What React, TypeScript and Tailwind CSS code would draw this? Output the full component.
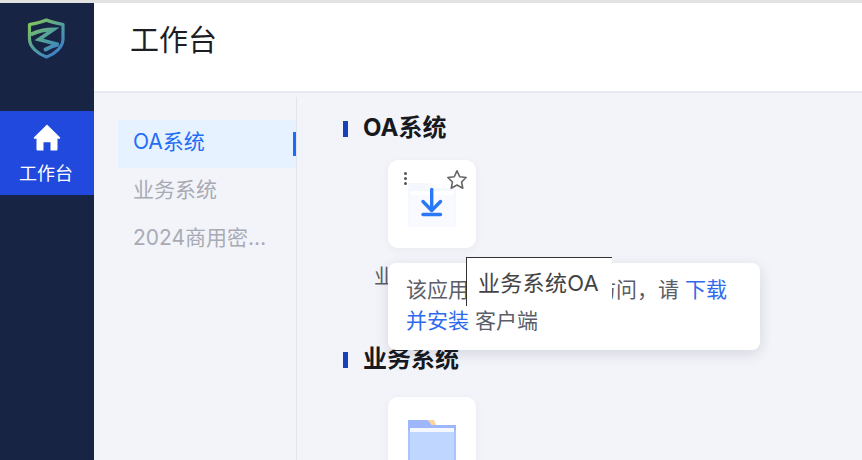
import React from "react";

const font = { fontFamily: '"Inter", "Noto Sans CJK SC", sans-serif' };

function Logo() {
  return (
    <svg width="40" height="44" viewBox="0 0 40 44" fill="none">
      <defs>
        <linearGradient id="lg" gradientUnits="userSpaceOnUse" x1="4" y1="4" x2="34" y2="40">
          <stop offset="0" stopColor="#86c55a" />
          <stop offset="0.5" stopColor="#4f9fa0" />
          <stop offset="1" stopColor="#3a76d2" />
        </linearGradient>
      </defs>
      <path d="M19.5 3 C25 5.5 31 6.5 36 7.5 L36 22 C36 30 28 37 19.5 40 C11 37 2.5 30 2.5 22 L2.5 7.5 C8 6.5 14 5.5 19.5 3 Z" stroke="url(#lg)" strokeWidth="3.2" strokeLinejoin="round" />
      <path d="M5 17 C11 14 19 12.5 26.5 12.5 L12 22.5 L31.5 27.5 C27 28.5 22 30.5 18.5 32.5" stroke="url(#lg)" strokeWidth="3.8" strokeLinejoin="miter" strokeLinecap="round" />
    </svg>
  );
}

function FileIcon({ faded }: { faded?: boolean }) {
  return (
    <svg width="48" height="44" viewBox="0 0 48 44" className={faded ? "opacity-10" : ""}>
      <path d="M0 0 H20 L24 5 H48 V10 H0 Z" fill="#9db7fa" />
      <path d="M20 0 H26 L28 5 H24 Z" fill="#fcd49a" />
      <rect x="0" y="10" width="48" height="34" fill="#abc4fb" />
      <rect x="2" y="8" width="44" height="4" fill="#f4f7ff" />
      <rect x="2" y="12" width="44" height="32" fill="#bfd6ff" />
    </svg>
  );
}

function Heading({ children }: { children: React.ReactNode }) {
  return (
    <div className="flex items-center h-[28px] gap-[15px]">
      <div className="w-[5px] h-[16px] bg-[#1741b8]" />
      <div className="text-[24px] font-bold text-[#17191f] leading-[28px] mb-[2px]">{children}</div>
    </div>
  );
}

function Card({ children }: { children?: React.ReactNode }) {
  return (
    <div className="relative ml-[45px] w-[88px] h-[88px] rounded-[10px] bg-white shadow-[0_2px_8px_rgba(30,50,110,0.05)] flex justify-center pt-[23px]">
      {children}
    </div>
  );
}

export default function App() {
  return (
    <div className="w-[862px] h-[460px] overflow-hidden flex flex-col bg-[#f3f4f9]" style={font}>
      <div className="h-[3px] bg-[#e2e2e2] shrink-0" />
      <div className="flex flex-1 min-h-0">
        <aside className="w-[94px] bg-[#182443] shrink-0 flex flex-col">
          <div className="h-[108px] flex justify-center pt-[14px]">
            <Logo />
          </div>
          <div className="h-[84px] bg-[#2149dd] flex flex-col items-center pt-[13px] text-white">
            <svg width="28" height="27" viewBox="0 0 28 25" preserveAspectRatio="none">
              <path d="M14 0.5 L27.2 12.6 Q27.6 13.5 26.6 13.6 L24.5 13.6 L24.5 23.5 Q24.5 24.5 23.5 24.5 L17.5 24.5 L17.5 17 L10.5 17 L10.5 24.5 L4.5 24.5 Q3.5 24.5 3.5 23.5 L3.5 13.6 L1.4 13.6 Q0.4 13.5 0.8 12.6 Z" fill="#fff" />
            </svg>
            <div className="text-[18px] leading-[24px] mt-[11px] mr-[2px]">工作台</div>
          </div>
        </aside>
        <main className="flex-1 min-w-0 flex flex-col">
          <header className="h-[90px] bg-white border-b-2 border-[#e8e9f0] shrink-0 pl-[36px] pt-[18px] text-[29px] leading-[40px] text-[#1c1e24]">
            工作台
          </header>
          <div className="flex flex-1 min-h-0 pt-[4px]">
            <nav className="w-[203px] h-full border-r border-[#e2e4ea] pl-[24px] pr-0 pt-[23px] shrink-0 text-[21px]">
              <div className="relative w-[178px] h-[48px] bg-[#e6f2ff] pl-[15px] leading-[44px] text-[#1f6ef5]">
                OA系统
                <div className="absolute right-0 top-[12px] w-[3px] h-[24px] bg-[#1c6cf5]" />
              </div>
              <div className="h-[48px] pl-[15px] leading-[44px] text-[#a8abb5]">业务系统</div>
              <div className="h-[48px] pl-[15px] leading-[44px] text-[#a8abb5] w-[150px] truncate">2024商用密码应用</div>
            </nav>
            <section className="flex-1 min-w-0 pl-[46px] pt-[18px]">
              <Heading>OA系统</Heading>
              <div className="mt-[17px]">
                <Card>
                  <FileIcon faded />
                  <svg className="absolute left-[29px] top-[26px]" width="30" height="32" viewBox="0 0 30 32" fill="none" stroke="#2a78f5" strokeWidth="3.4" strokeLinecap="round" strokeLinejoin="round">
                    <path d="M14.7 3.5 V24" />
                    <path d="M6 15.5 L14.7 24.5 L23.5 15.5" />
                    <path d="M6 28.5 H23.5" />
                  </svg>
                  <div className="absolute left-[16px] top-[12px] flex flex-col gap-[2px]">
                    <span className="w-[3px] h-[3px] rounded-full bg-[#555]" />
                    <span className="w-[3px] h-[3px] rounded-full bg-[#555]" />
                    <span className="w-[3px] h-[3px] rounded-full bg-[#555]" />
                  </div>
                  <svg className="absolute left-[58px] top-[9px]" width="22" height="21" viewBox="0 0 24 23" fill="none" stroke="#666" strokeWidth="1.8" strokeLinejoin="round">
                    <path d="M12 2 L15 8.5 L22 9.3 L17 14.2 L18.3 21 L12 17.6 L5.7 21 L7 14.2 L2 9.3 L9 8.5 Z" />
                  </svg>
                </Card>
              </div>
              <div className="relative h-[98px]">
                <div className="absolute left-[31px] top-[16px] text-[20px] leading-[26px] text-[#5a5d66]">业务系统OA</div>
                <div className="absolute left-[45px] top-[15px] w-[372px] h-[87px] rounded-[8px] bg-white shadow-[0_4px_14px_rgba(30,40,80,0.14)] z-10 pl-[18px] pr-[20px] pt-[11px] text-[21px] leading-[31px] text-[#5b5e68]">
                  该应用需要在客户端访问，请 <span className="text-[#2f6bf0]">下载并安装</span> 客户端
                </div>
                <div className="absolute left-[123px] top-[9px] w-[146px] h-[49px] z-20 bg-white border-l border-t border-[#333] pl-[11px] pt-[9px] text-[22px] leading-[32px] text-[#444] whitespace-nowrap tracking-[0.3px]">
                  业务系统OA
                </div>
              </div>
              <div>
                <Heading>业务系统</Heading>
              </div>
              <div className="mt-[23px]">
                <Card>
                  <FileIcon />
                </Card>
              </div>
            </section>
          </div>
        </main>
      </div>
    </div>
  );
}
